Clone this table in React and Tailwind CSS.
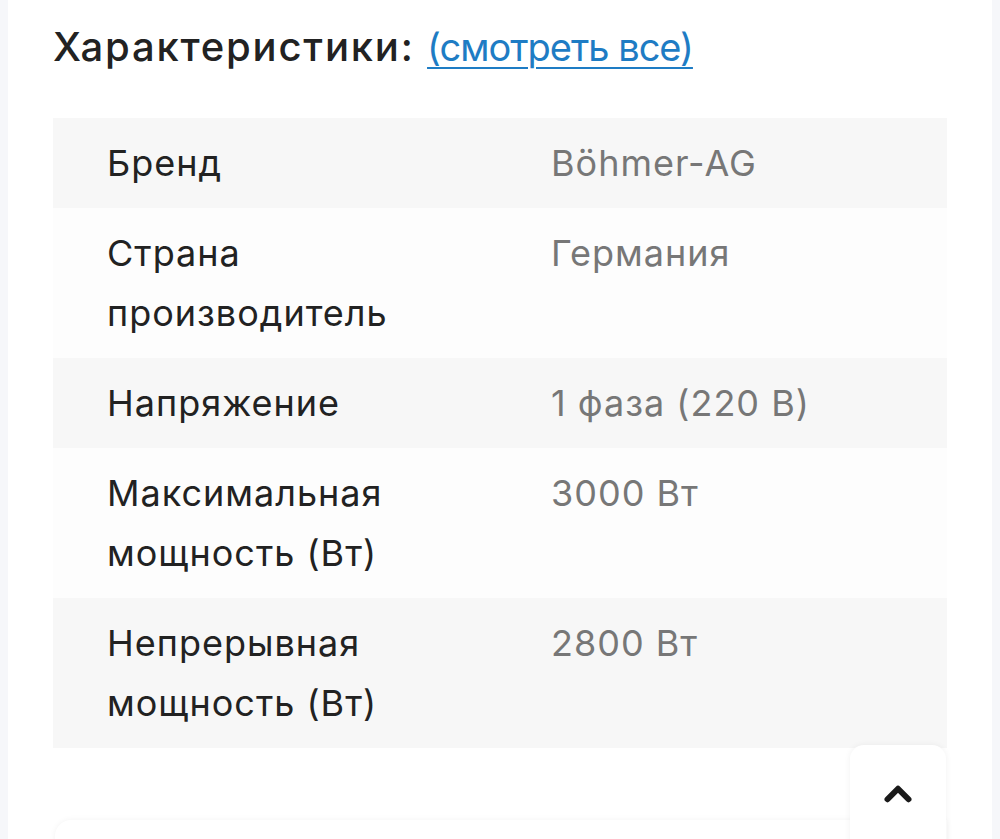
import { ChevronUp } from "lucide-react";

const specs = [
  { label: "Бренд", value: "Böhmer-AG" },
  { label: "Страна производитель", value: "Германия" },
  { label: "Напряжение", value: "1 фаза (220 В)" },
  { label: "Максимальная мощность (Вт)", value: "3000 Вт" },
  { label: "Непрерывная мощность (Вт)", value: "2800 Вт" },
];

export default function App() {
  return (
    <div className="min-h-screen bg-[#f6f7fa] px-[8px] overflow-hidden font-['Inter',sans-serif]">
      <div className="relative bg-white min-h-[839px] px-[45px] pt-[22px]">
        {/* Heading */}
        <h2 className="text-[40px] leading-[50px] font-medium text-[#222] tracking-[1.8px]">
          Характеристики:{" "}
          <a
            href="#"
            className="text-[#1e7cc4] text-[38px] font-normal tracking-[-1px] underline underline-offset-[6px] decoration-[2px]"
          >
            (смотреть все)
          </a>
        </h2>

        {/* Spec table */}
        <div className="mt-[46px]">
          {specs.map((s, i) => (
            <div
              key={s.label}
              className={`grid grid-cols-[498px_1fr] py-[15px] text-[36px] leading-[60px] tracking-[1px] ${
                i % 2 === 0 ? "bg-[#f7f7f7]" : "bg-[#fdfdfd]"
              }`}
            >
              <div className="pl-[54px] pr-[60px] text-[#222]">{s.label}</div>
              <div className="text-[#777]">{s.value}</div>
            </div>
          ))}
        </div>

        {/* Bottom card */}
        <div className="mt-[72px] ml-[2px] h-[40px] rounded-tl-[16px] bg-white shadow-[0_0_6px_rgba(0,0,0,0.05)]" />

        {/* Scroll-to-top button */}
        <button className="absolute left-[842px] top-[745px] w-[96px] h-[110px] rounded-[14px] bg-white shadow-[0_0_6px_rgba(0,0,0,0.06)] flex items-center justify-center">
          <ChevronUp size={42} strokeWidth={3.4} className="text-[#1a1a1a] mt-[-12px]" />
        </button>
      </div>
    </div>
  );
}
